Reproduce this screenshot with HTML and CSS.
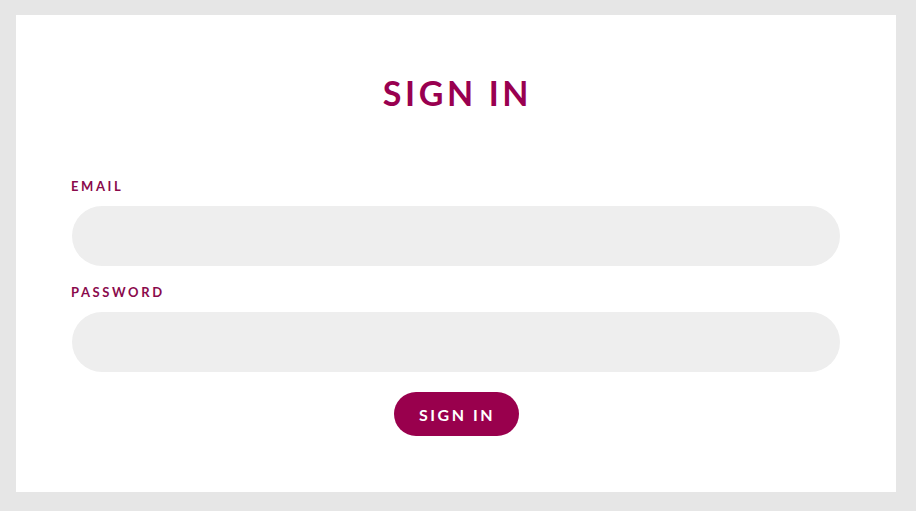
FILE: index.html
```html
<!DOCTYPE html>
<html>
<head>
<meta charset="utf-8">
<link rel="stylesheet" href="styles.css">
</head>
<body>
<form class="card">
  <h1 class="title">SIGN IN</h1>
  <div class="field">
    <label class="label" for="email">EMAIL</label>
    <input class="input" id="email" type="email">
  </div>
  <div class="field">
    <label class="label" for="password">PASSWORD</label>
    <input class="input" id="password" type="password">
  </div>
  <div class="actions">
    <button class="button" type="button">SIGN IN</button>
  </div>
</form>
</body>
</html>
```
FILE: styles.css
```css
html, body {
  margin: 0;
  padding: 0;
  background: #e6e6e6;
}
body {
  padding: 15px 20px 19px 16px;
  font-family: Lato, "Noto Sans", sans-serif;
}
.card {
  background: #ffffff;
  height: 477px;
  box-sizing: border-box;
  padding: 54px 56px 0 56px;
  display: flex;
  flex-direction: column;
}
.title {
  margin: 0 0 61px 0;
  text-align: center;
  color: #990050;
  font-size: 34px;
  font-weight: 700;
  letter-spacing: 3.6px;
  line-height: 48px;
  padding-left: 3px;
}
.field {
  display: flex;
  flex-direction: column;
  margin-bottom: 18px;
}
.label {
  color: #8a0a4c;
  font-size: 13px;
  font-weight: 700;
  letter-spacing: 2.6px;
  line-height: 16px;
  margin-bottom: 12px;
  margin-left: -1px;
}
.input {
  height: 60px;
  border: none;
  border-radius: 30px;
  background: #eeeeee;
  padding: 0 24px;
  box-sizing: border-box;
  outline: none;
}
.actions {
  display: flex;
  justify-content: center;
  margin-top: 2px;
}
.button {
  width: 125px;
  height: 44px;
  border: none;
  border-radius: 22px;
  background: #99004d;
  color: #ffffff;
  font-family: Lato, "Noto Sans", sans-serif;
  font-size: 16px;
  font-weight: 700;
  letter-spacing: 2.5px;
  padding: 0 0 0 2px;
}
```
